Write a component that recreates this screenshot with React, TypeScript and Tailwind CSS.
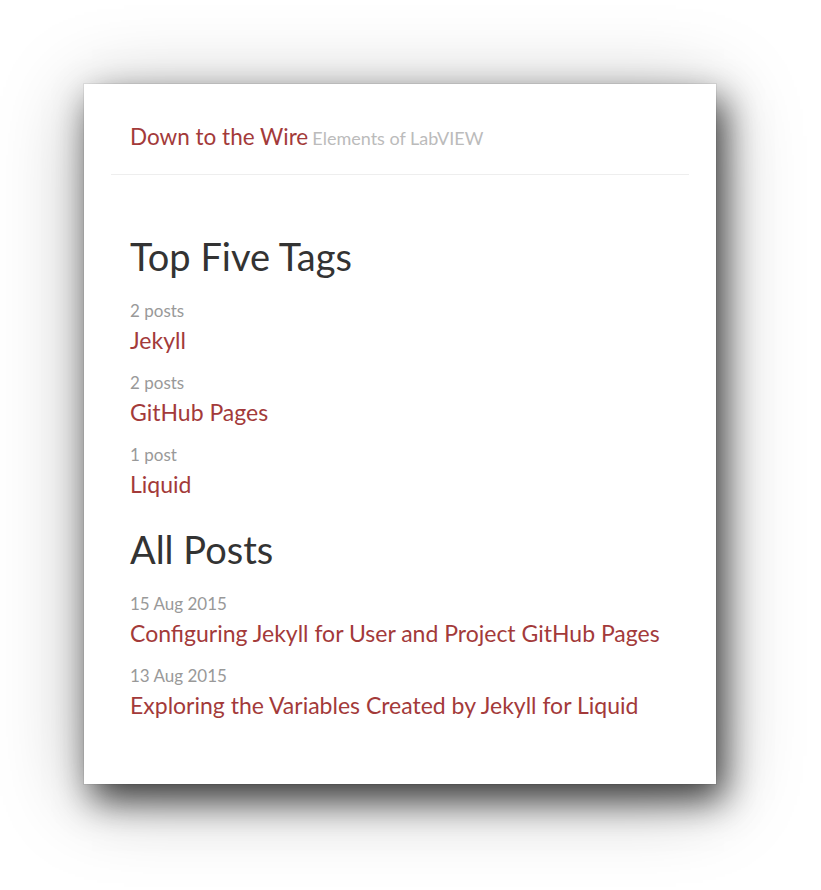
const tags = [
  { count: '2 posts', name: 'Jekyll' },
  { count: '2 posts', name: 'GitHub Pages' },
  { count: '1 post', name: 'Liquid' },
]

const posts = [
  { date: '15 Aug 2015', title: 'Configuring Jekyll for User and Project GitHub Pages' },
  { date: '13 Aug 2015', title: 'Exploring the Variables Created by Jekyll for Liquid' },
]

function Entry({ meta, label }: { meta: string; label: string }) {
  return (
    <li className="mb-[14px]">
      <div className="text-[17px] leading-[24px] text-[#999]">{meta}</div>
      <a href="#" className="block text-[23px] leading-[34px] text-[#a33a3a]">
        {label}
      </a>
    </li>
  )
}

export default function App() {
  return (
    <div className="min-h-screen bg-white pl-[84px] pt-[84px] font-['Lato','Liberation_Sans',sans-serif]">
      <div className="h-[700px] w-[632px] bg-white px-[27px] shadow-[0_0_0_1px_rgba(0,0,0,0.06),8px_16px_34px_rgba(0,0,0,0.72),0_12px_80px_rgba(0,0,0,0.28)]">
        <header className="border-b border-[#eee] px-[19px] pb-[20px] pt-[36px]">
          <a href="#" className="text-[22.5px] leading-[34px] text-[#a33a3a]">
            Down to the Wire
          </a>{' '}
          <span className="text-[18px] text-[#bbb]">Elements of LabVIEW</span>
        </header>

        <main className="px-[19px] pt-[58px]">
          <h1 className="mb-[20px] text-[38px] leading-[46px] text-[#333]">Top Five Tags</h1>
          <ul>
            {tags.map((t) => (
              <Entry key={t.name} meta={t.count} label={t.name} />
            ))}
          </ul>

          <h1 className="mb-[20px] mt-[25px] text-[38px] leading-[46px] text-[#333]">All Posts</h1>
          <ul>
            {posts.map((p) => (
              <Entry key={p.title} meta={p.date} label={p.title} />
            ))}
          </ul>
        </main>
      </div>
    </div>
  )
}
